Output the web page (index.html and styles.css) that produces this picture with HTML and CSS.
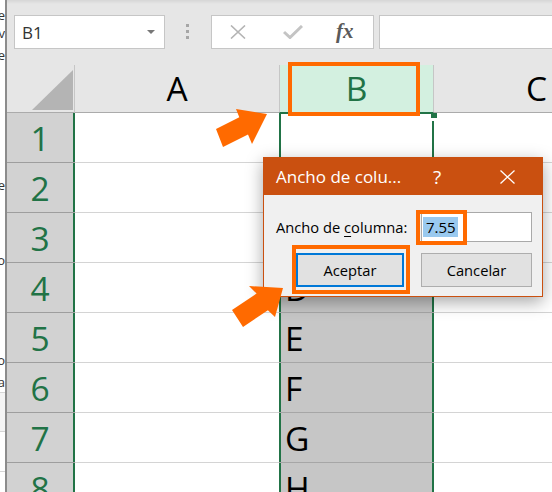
FILE: index.html
```html
<!DOCTYPE html>
<html>
<head>
<meta charset="utf-8">
<link rel="stylesheet" href="styles.css">
</head>
<body>
<div class="screen">
  <div class="side">
    <div class="fr f1">ue</div>
    <div class="fr f2">v</div>
    <div class="fr f3">Te</div>
    <div class="fr f4">e</div>
    <div class="fr f5">o</div>
    <div class="fr f6">o</div>
    <div class="fr f7">a</div>
    <div class="sidebox"></div>
    <div class="sideline"></div>
  </div>
  <div class="excel">
    <div class="toolbar">
      <div class="namebox"><span>B1</span><span class="caret"></span></div>
      <div class="grip"><i></i><i></i><i></i></div>
      <div class="fxbtns">
        <svg class="ico-x" width="16" height="14" viewBox="0 0 16 14"><path d="M1 0.5 L15 13.5 M15 0.5 L1 13.5" stroke="#b4b4b4" stroke-width="1.6" fill="none"/></svg>
        <svg class="ico-ok" width="20" height="14" viewBox="0 0 20 14"><path d="M1 7 L7 12.5 L19 1" stroke="#c4c4c4" stroke-width="3" fill="none"/></svg>
        <span class="fx">fx</span>
      </div>
      <div class="fxinput"></div>
    </div>
    <div class="sheet">
      <div class="hdr corner"><svg width="41" height="40" viewBox="0 0 41 40"><polygon points="0,40 41,0 41,40" fill="#b4b4b4"/></svg></div>
      <div class="hdr col colA">A</div>
      <div class="hdr col colB">B</div>
      <div class="hdr col colC">C</div>

      <div class="rh">1</div><div class="cell"></div><div class="bact"><span class="handle"></span></div><div class="cell"></div>
      <div class="rh">2</div><div class="cell"></div><div class="bsel">B</div><div class="cell"></div>
      <div class="rh">3</div><div class="cell"></div><div class="bsel">C</div><div class="cell"></div>
      <div class="rh">4</div><div class="cell"></div><div class="bsel">D</div><div class="cell"></div>
      <div class="rh">5</div><div class="cell"></div><div class="bsel">E</div><div class="cell"></div>
      <div class="rh">6</div><div class="cell"></div><div class="bsel">F</div><div class="cell"></div>
      <div class="rh">7</div><div class="cell"></div><div class="bsel">G</div><div class="cell"></div>
      <div class="rh">8</div><div class="cell"></div><div class="bsel">H</div><div class="cell"></div>
    </div>
  </div>

  <div class="dialog">
    <div class="title">
      <span class="ttext">Ancho de colu...</span>
      <span class="help">?</span>
      <svg class="close" width="15" height="14" viewBox="0 0 15 14"><path d="M0.5 0.5 L14.5 13.5 M14.5 0.5 L0.5 13.5" stroke="#fff" stroke-width="1.3" fill="none"/></svg>
    </div>
    <div class="dbody">
      <div class="field">
        <span class="label">Ancho de <u>c</u>olumna:</span>
        <div class="input"><span class="selected">7.55</span></div>
      </div>
      <div class="buttons">
        <div class="btn primary">Aceptar</div>
        <div class="btn cancel">Cancelar</div>
      </div>
    </div>
  </div>

  <div class="hl hl-col"></div>
  <div class="hl hl-input"></div>
  <div class="hl hl-btn"></div>

  <svg class="arrows" width="552" height="492" viewBox="0 0 552 492">
    <polygon points="216,129 239.3,117.2 236,109 267,114 252,144 248,134.4 223,147" fill="#ff6a00"/>
    <polygon points="232,310 256.6,293.5 249,286 283,288 275,317 267.9,310.3 243,327" fill="#ff6a00"/>
  </svg>
</div>
</body>
</html>
```
FILE: styles.css
```css
body {
  margin: 0;
  font-family: "Open Sans", "Noto Sans", sans-serif;
}

.screen {
  position: relative;
  width: 552px;
  height: 492px;
  overflow: hidden;
  display: flex;
  background: #fff;
}

/* left strip of another window */
.side {
  width: 5px;
  flex: none;
  border-right: 2px solid #8c8c8c;
  overflow: hidden;
  display: flex;
  flex-direction: column;
  align-items: flex-end;
  font-size: 13px;
  color: #333;
  white-space: nowrap;
  background: #fff;
}
.fr { height: 18px; line-height: 18px; }
.f1 { margin-top: 6px; }
.f2 { margin-top: 0; }
.f3 { margin-top: 4px; }
.f4 { margin-top: 112px; }
.f5 { margin-top: 57px; }
.f6 { margin-top: 82px; }
.f7 { margin-top: 4px; }
.sidebox {
  width: 100%;
  margin-top: 1px;
  height: 38px;
  background: #f4f4f4;
  border-top: 1px solid #d6d6d6;
  border-bottom: 1px solid #d6d6d6;
  flex: none;
}
.sideline {
  width: 100%;
  margin-top: 39px;
  border-top: 1px solid #d6d6d6;
  flex: none;
}

.excel {
  flex: 1;
  min-width: 0;
  display: flex;
  flex-direction: column;
}

.toolbar {
  height: 65px;
  flex: none;
  box-sizing: border-box;
  padding-top: 15px;
  padding-left: 7px;
  display: flex;
  align-items: flex-start;
  background: linear-gradient(#d6d6d6, #e6e6e6 4px);
}

.namebox {
  width: 151px;
  height: 34px;
  flex: none;
  box-sizing: border-box;
  background: #fff;
  border: 1px solid #c6c6c6;
  display: flex;
  align-items: center;
  justify-content: space-between;
  padding: 0 9px 0 7px;
  font-size: 17px;
  color: #333;
}
.caret {
  width: 0;
  height: 0;
  border-left: 4px solid transparent;
  border-right: 4px solid transparent;
  border-top: 4px solid #777;
}

.grip {
  width: 3px;
  flex: none;
  margin-left: 21px;
  margin-top: 9px;
  display: flex;
  flex-direction: column;
  gap: 3px;
}
.grip i {
  display: block;
  width: 3px;
  height: 3px;
  background: #a6a6a6;
}

.fxbtns {
  width: 163px;
  height: 34px;
  flex: none;
  margin-left: 22px;
  box-sizing: border-box;
  background: #fff;
  border: 1px solid #c6c6c6;
  display: flex;
  align-items: center;
  padding-left: 18px;
}
.ico-ok { margin-left: 37px; }
.fx {
  margin-left: 33px;
  font-family: "Liberation Serif", "DejaVu Serif", serif;
  font-style: italic;
  font-weight: bold;
  font-size: 21px;
  color: #5a5a5a;
  line-height: 1;
  margin-top: -2px;
}

.fxinput {
  flex: 1;
  margin-left: 5px;
  margin-right: -10px;
  height: 34px;
  box-sizing: border-box;
  background: #fff;
  border: 1px solid #c6c6c6;
}

/* sheet grid */
.sheet {
  display: grid;
  grid-template-columns: 68px 204px 155px 205px;
  grid-template-rows: 48px repeat(8, 50px);
  background: #fff;
}

.hdr {
  box-sizing: border-box;
  background: #e6e6e6;
  border-bottom: 1px solid #ababab;
  font-size: 33.5px;
  line-height: 47px;
  text-align: center;
  color: #000;
  overflow: hidden;
}
.corner {
  border-right: 1px solid #c6c6c6;
  display: flex;
  align-items: flex-end;
  justify-content: flex-end;
  padding: 0 1px 2px 0;
}
.corner svg { display: block; }
.colB {
  background: #d3f0e0;
  color: #217346;
  border-left: 1px solid #c6c6c6;
  border-right: 1px solid #c6c6c6;
  border-bottom: 1px solid #217346;
}

.rh {
  box-sizing: border-box;
  background: #d2d2d2;
  border-bottom: 1px solid #9e9e9e;
  box-shadow: inset -2px 0 #217346;
  color: #217346;
  font-size: 33.5px;
  line-height: 49px;
  padding: 1px 2px 0 0;
  text-align: center;
  overflow: hidden;
}

.cell {
  box-sizing: border-box;
  border-bottom: 1px solid #d4d4d4;
}

.bsel {
  box-sizing: border-box;
  background: #c6c6c6;
  border-bottom: 1px solid #a6a6a6;
  box-shadow: inset 2px 0 #217346, inset -2px 0 #217346;
  font-size: 33.5px;
  line-height: 49px;
  padding: 1px 0 0 6px;
  color: #000;
  overflow: hidden;
}

.bact {
  position: relative;
  box-sizing: border-box;
  background: #fff;
  border-bottom: 1px solid #a6a6a6;
  box-shadow: inset 2px 0 #217346, inset -2px 0 #217346, inset 0 1px #217346;
}
.handle {
  position: absolute;
  top: 0;
  right: -3px;
  width: 6px;
  height: 5px;
  background: #217346;
  border-bottom: 3px solid #fff;
}

/* dialog */
.dialog {
  position: absolute;
  left: 263px;
  top: 157px;
  width: 280px;
  height: 140px;
  box-sizing: border-box;
  border: 1px solid #ca5010;
  background: #f0f0f0;
  box-shadow: 0 5px 16px rgba(0, 0, 0, 0.35);
  display: flex;
  flex-direction: column;
}
.title {
  height: 37px;
  flex: none;
  background: #ca5010;
  color: #fff;
  display: flex;
  align-items: center;
  padding: 0 27px 0 12px;
  font-size: 17px;
}
.ttext { flex: 1; }
.help {
  width: 20px;
  text-align: center;
  font-size: 19px;
  margin-right: 53px;
}
.close { display: block; }

.dbody {
  flex: 1;
  padding: 17px 10px 0 12px;
  display: flex;
  flex-direction: column;
  gap: 11px;
  font-size: 14.7px;
  color: #000;
}
.field {
  height: 30px;
  display: flex;
  align-items: center;
  justify-content: space-between;
}
.label u { text-decoration-thickness: 1px; text-underline-offset: 3px; }
.input {
  width: 111px;
  height: 30px;
  box-sizing: border-box;
  background: #fff;
  border: 1px solid #a9a9a9;
  display: flex;
  align-items: center;
  padding-left: 1px;
  font-size: 15px;
}
.selected {
  background: #99c9ef;
  line-height: 20px;
  padding: 0 2px 0 3px;
}
.buttons {
  display: flex;
  gap: 17px;
  padding-left: 20px;
}
.btn {
  height: 34px;
  box-sizing: border-box;
  background: #e1e1e1;
  border: 1px solid #adadad;
  display: flex;
  align-items: center;
  justify-content: center;
}
.primary {
  width: 108px;
  border: 2px solid #0078d7;
}
.cancel { width: 111px; }

/* orange highlights */
.hl {
  position: absolute;
  box-sizing: border-box;
  border: 4px solid #ff6a00;
}
.hl-col { left: 288px; top: 62px; width: 132px; height: 54px; }
.hl-input { left: 416px; top: 210px; width: 51px; height: 35px; }
.hl-btn { left: 292px; top: 245px; width: 118px; height: 49px; }

.arrows {
  position: absolute;
  left: 0;
  top: 0;
  pointer-events: none;
}
```
